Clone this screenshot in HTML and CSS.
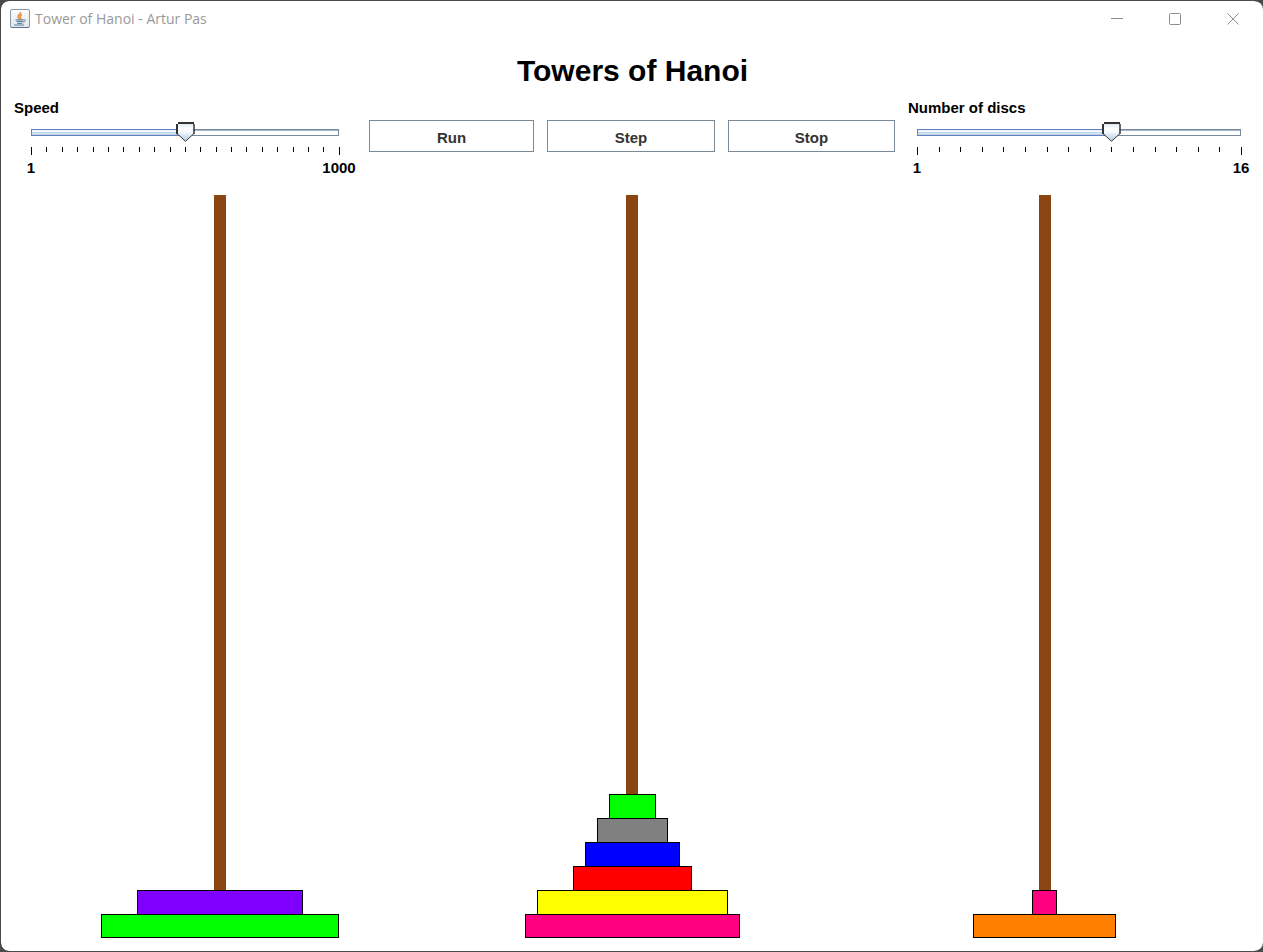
FILE: index.html
```html
<!DOCTYPE html>
<html lang="en">
<head>
<meta charset="utf-8">
<title>Tower of Hanoi - Artur Pas</title>
<link rel="stylesheet" href="styles.css">
</head>
<body>
<div class="window">
  <header class="titlebar">
    <svg class="app-icon" viewBox="0 0 20 20" aria-hidden="true">
      <defs>
        <linearGradient id="tile" x1="0" y1="0" x2="0" y2="1">
          <stop offset="0" stop-color="#fdfdfd"/>
          <stop offset="1" stop-color="#dfe4e8"/>
        </linearGradient>
      </defs>
      <rect x="0.5" y="0.5" width="19" height="18" rx="1.5" fill="url(#tile)" stroke="#8799aa"/>
      <path d="M1 18.5H19" stroke="#5c7690"/>
      <path d="M10.5 3c1 2-3.500 3-2.500 5 .3.700 1 1 1.500 1.800M12 5.500c-2 1-2.500 2-1.500 3 .5.600.2 1.200-.3 1.700" fill="none" stroke="#e8873a" stroke-width="1.500"/>
      <path d="M5.500 10.800h8M6.500 12.500h6.500M7.200 14.300h5M4 16h10" fill="none" stroke="#5f82a1" stroke-width="1.200"/>
      <path d="M13.500 10.800c2.500-.8 2.500 1.700-.5 2.500" fill="none" stroke="#5f82a1"/>
    </svg>
    <span class="caption">Tower of Hanoi - Artur Pas</span>
    <button class="window-button" type="button" aria-label="Minimize">
      <svg viewBox="0 0 12 12"><path d="M0 5.500H12"/></svg>
    </button>
    <button class="window-button" type="button" aria-label="Maximize">
      <svg viewBox="0 0 12 12"><rect x="0.500" y="0.500" width="11" height="11" rx="1"/></svg>
    </button>
    <button class="window-button" type="button" aria-label="Close">
      <svg viewBox="0 0 12 12"><path d="M0.500 0.500l11 11M11.500 0.500l-11 11"/></svg>
    </button>
  </header>

  <main class="content">
    <h1 class="heading">Towers of Hanoi</h1>

    <div class="controls">
      <div class="slider slider-speed">
        <label class="slider-label" for="speed">Speed</label>
        <input class="range" id="speed" type="range" min="1" max="1000" value="502" style="--fill: 0.502">
        <div class="ticks">
          <i></i><i></i><i></i><i></i><i></i><i></i><i></i><i></i><i></i><i></i><i></i><i></i><i></i><i></i><i></i><i></i><i></i><i></i><i></i><i></i><i></i>
        </div>
        <div class="scale"><span>1</span><span>1000</span></div>
      </div>

      <button class="action" type="button">Run</button>
      <button class="action" type="button">Step</button>
      <button class="action" type="button">Stop</button>

      <div class="slider">
        <label class="slider-label" for="discs">Number of discs</label>
        <input class="range" id="discs" type="range" min="1" max="16" value="10" style="--fill: 0.6">
        <div class="ticks">
          <i></i><i></i><i></i><i></i><i></i><i></i><i></i><i></i><i></i><i></i><i></i><i></i><i></i><i></i><i></i><i></i>
        </div>
        <div class="scale"><span>1</span><span>16</span></div>
      </div>
    </div>

    <div class="towers">
      <div class="tower">
        <div class="pole"></div>
        <div class="disc violet" style="--size: 7"></div>
        <div class="disc green" style="--size: 10"></div>
      </div>
      <div class="tower">
        <div class="pole"></div>
        <div class="disc green" style="--size: 2"></div>
        <div class="disc gray" style="--size: 3"></div>
        <div class="disc blue" style="--size: 4"></div>
        <div class="disc red" style="--size: 5"></div>
        <div class="disc yellow" style="--size: 8"></div>
        <div class="disc pink" style="--size: 9"></div>
      </div>
      <div class="tower">
        <div class="pole"></div>
        <div class="disc pink" style="--size: 1"></div>
        <div class="disc orange" style="--size: 6"></div>
      </div>
    </div>
  </main>
</div>
</body>
</html>
```
FILE: styles.css
```css
* {
  box-sizing: border-box;
}

body {
  margin: 0;
  background: #4a4a4c;
  color: #000;
  font: bold 15px/16px "Liberation Sans", Arial, sans-serif;
}

.window {
  display: flex;
  flex-direction: column;
  min-height: 100vh;
  border: 1px solid #4a4a4c;
  border-right: 0;
  border-radius: 9px;
  background: #fff;
  background-clip: padding-box;
}

/* Title bar */

.titlebar {
  display: flex;
  align-items: center;
  height: 36px;
  padding: 0 1px 0 9px;
}

.app-icon {
  width: 20px;
  height: 20px;
  margin-right: 5px;
}

.caption {
  flex: 1;
  color: #999;
  font: 14px/20px "Open Sans", "Noto Sans", sans-serif;
}

.window-button {
  display: flex;
  align-items: center;
  justify-content: center;
  width: 58px;
  height: 36px;
  padding: 0;
  border: 0;
  background: none;
}

.window-button svg {
  width: 12px;
  height: 12px;
  fill: none;
  stroke: #8c8c8c;
}

/* Content */

.content {
  display: flex;
  flex: 1;
  flex-direction: column;
  padding: 14px 12px 13px 13px;
}

.heading {
  margin: 0 0 9px;
  font-size: 30px;
  line-height: 40px;
  text-align: center;
}

.controls {
  display: grid;
  grid-template-columns: 342fr 165fr 168fr 167fr 342fr;
  gap: 13px;
  align-items: start;
  margin-right: 1px;
}

.action {
  height: 32px;
  margin-top: 20px;
  padding: 3px 0 0;
  border: 1px solid #7a8a99;
  background: #fff;
  color: #333;
  font: inherit;
}

/* Sliders */

.slider {
  --inset: 0px;
}

.slider-speed {
  --inset: 8px;
}

.slider-label {
  display: block;
  margin-bottom: 6px;
}

.range {
  --groove: calc(100% - 18px);
  display: block;
  width: calc(100% - 2 * var(--inset));
  height: 20px;
  margin: 0 var(--inset);
  appearance: none;
  background:
    linear-gradient(#6382bf, #6382bf) 9px 7px / 1px 7px no-repeat,
    linear-gradient(#6382bf 1px, #e4eef8 1px 2px, #fff 2px 3px, #b8cfe5 3px 4px, #dce8f3 4px 5px, #b8cfe5 5px 6px, #6382bf 6px) 9px 7px / calc(var(--groove) * var(--fill)) 7px no-repeat,
    linear-gradient(#7a8a99, #7a8a99) right 9px top 7px / 1px 7px no-repeat,
    linear-gradient(#7a8a99 1px, #a3b8cc 1px 2px, #fff 2px 6px, #7a8a99 6px) 9px 7px / var(--groove) 7px no-repeat;
}

.range::-webkit-slider-runnable-track {
  height: 20px;
}

.range::-webkit-slider-thumb {
  width: 19px;
  height: 20px;
  appearance: none;
  border: 0;
  background: url("data:image/svg+xml,%3Csvg xmlns='http://www.w3.org/2000/svg' viewBox='0 0 19 20'%3E%3Cdefs%3E%3ClinearGradient id='g' x1='0' y1='0' x2='0' y2='1'%3E%3Cstop offset='0' stop-color='%23d5e3f2'/%3E%3Cstop offset='.3' stop-color='%23fff'/%3E%3Cstop offset='.5' stop-color='%23f4f8fc'/%3E%3Cstop offset='1' stop-color='%23b0cae3'/%3E%3C/linearGradient%3E%3C/defs%3E%3Cpath d='M1.5 1H17.5V12L9.5 19L1.5 12Z' fill='url(%23g)'/%3E%3Cpath d='M1 12V2M2 1H18' fill='none' stroke='%23333' stroke-width='2'/%3E%3Cpath d='M18 12V2' stroke='%23333' stroke-width='1.5'/%3E%3Cpath d='M1 11.500L9.500 19.300L18 11.500' fill='none' stroke='%23333'/%3E%3C/svg%3E") no-repeat;
}

.ticks {
  display: flex;
  justify-content: space-between;
  height: 8px;
  margin: 5px calc(var(--inset) + 8px) 0 calc(var(--inset) + 9px);
}

.ticks i {
  width: 1px;
  height: 5px;
  background: #000;
}

.ticks i:first-child,
.ticks i:last-child {
  height: 8px;
}

.scale {
  display: flex;
  justify-content: space-between;
  margin: 5px calc(var(--inset) - 8px) 0;
}

.scale span {
  width: 34px;
  text-align: center;
}

/* Towers */

.towers {
  display: grid;
  flex: 1;
  grid-template-columns: repeat(3, 1fr);
  margin-top: 19px;
}

.tower {
  display: flex;
  flex-direction: column;
  align-items: center;
}

.pole {
  flex: 1;
  width: 12px;
  background: #8b4513;
}

.disc {
  width: calc(var(--size) * 5.77%);
  min-width: 25px;
  height: 24px;
  border: 1px solid #000;
  border-bottom-width: 0;
}

.disc:last-child {
  border-bottom-width: 1px;
}

.violet { background: #8000ff; }
.green { background: #0f0; }
.gray { background: #808080; }
.blue { background: #00f; }
.red { background: #f00; }
.yellow { background: #ff0; }
.pink { background: #ff0080; }
.orange { background: #ff8000; }
```
